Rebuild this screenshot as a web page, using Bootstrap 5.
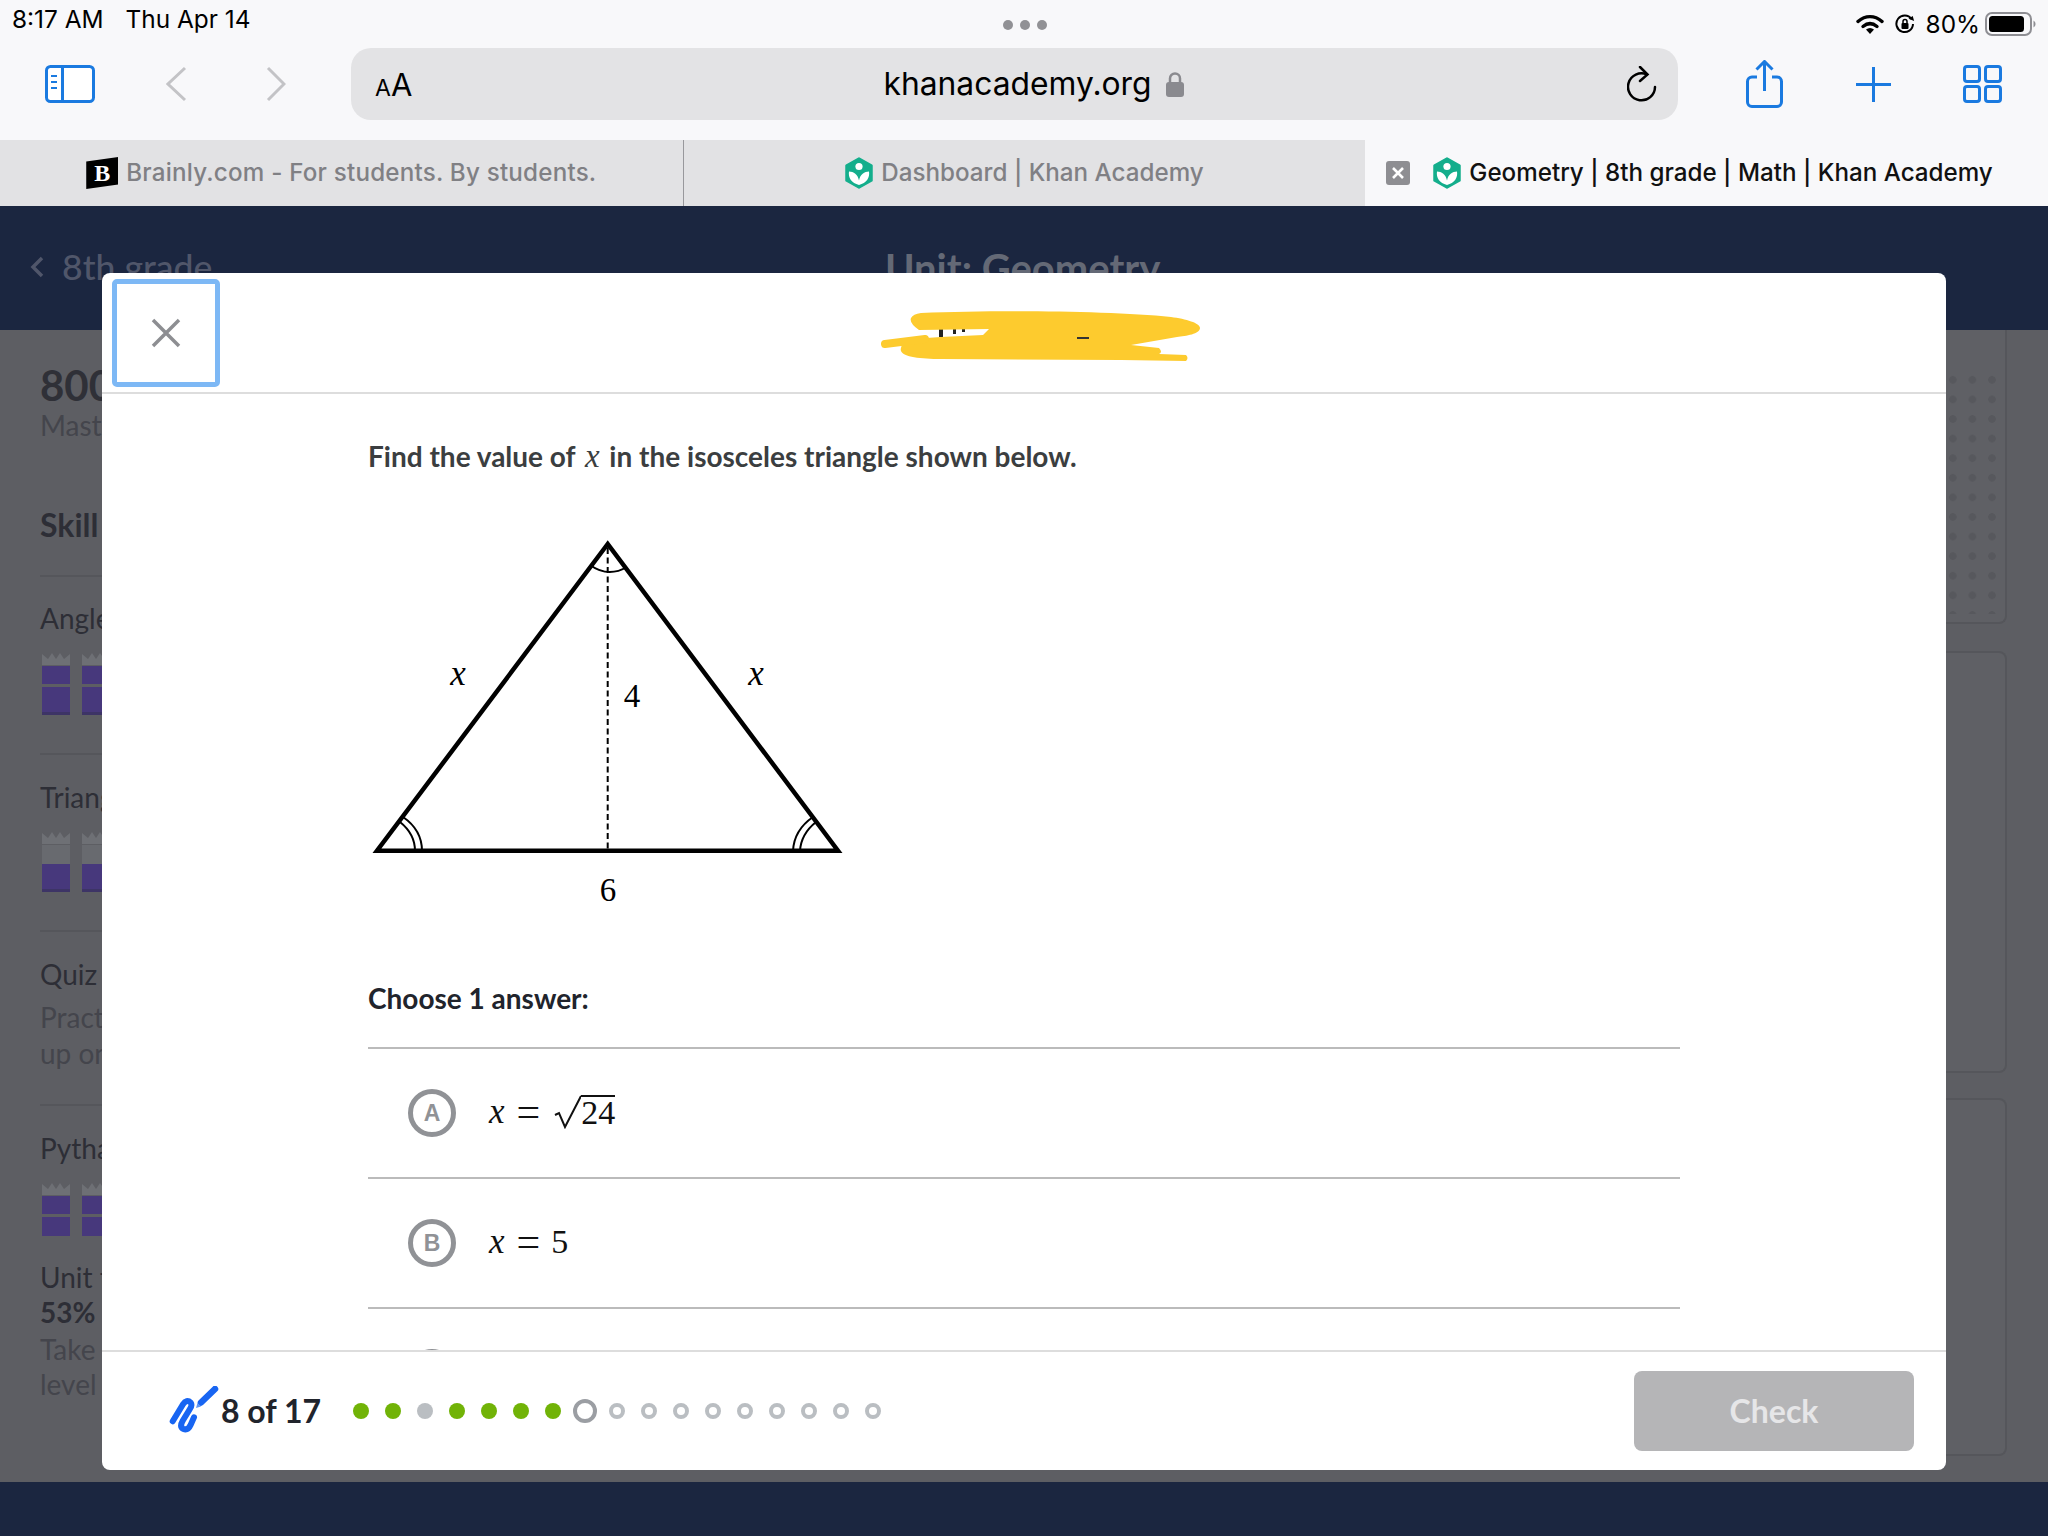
<!DOCTYPE html>
<html lang="en">
<head>
<meta charset="utf-8">
<title>Geometry | 8th grade | Math | Khan Academy</title>
<link href="https://cdn.jsdelivr.net/npm/bootstrap@5.3.0/dist/css/bootstrap.min.css" rel="stylesheet">
<style>
html,body{margin:0;width:2048px;height:1536px;overflow:hidden;background:#5d5e63}
body{font-family:"Lato","Liberation Sans",sans-serif;position:relative}
.chrome-top{background:#f8f8fa;height:140px;font-family:"Inter","Liberation Sans",sans-serif}
.status-row{height:48px;color:#000;font-size:24.4px;line-height:38px}
.status-side{flex:1 1 0}
.status-date{margin-left:22px}
.status-left{padding-left:12px}
.status-right{padding-right:11px;gap:10px}
.pct{margin-right:-5px}
.dots-row{gap:7px;margin-top:20px;height:10px}
.dots-row i{width:10px;height:10px;border-radius:50%;background:#919195;display:block}
.tool-row{height:72px;padding-left:45px}
.ml-back{margin-left:71px}.ml-fwd{margin-left:79px}.ml-pill{margin-left:65px}
.ml-share{margin-left:68px}.ml-plus{margin-left:73px}.ml-grid{margin-left:72px}
.url-pill{width:1327px;height:72px;background:#e3e3e5;border-radius:20px;padding:0 21px 0 24px}
.aa{color:#000;font-size:31px;line-height:1;width:38px;white-space:nowrap}
.aa small{font-size:23px}
.domain{font-size:31.8px;color:#000;margin-left:27px;gap:14px}
.tabs-row{height:66px;font-family:"Inter","Liberation Sans",sans-serif;font-size:24.2px;font-weight:500}
.tab-item{flex:0 0 33.3333%;background:#e2e2e4;color:#808084;gap:8px;white-space:nowrap}
.tab-mid{border-left:1px solid #98989c}
.tab-on{background:#f8f8fa;color:#111;padding-left:21px}
.tab-x{width:24px;height:24px;background:#8e8e92;border-radius:3px;margin-right:15px}
.brainly-text{letter-spacing:.2px}
.brainly-mark{width:32px;height:32px;background:#000;color:#fff;font:700 24px/32px "Liberation Serif",serif;text-align:center;clip-path:polygon(0 14%,100% 0,100% 86%,0 100%)}
.page-head{height:124px;background:#1b2640;color:#50566a;padding-left:30px}
.back-link{font-size:35.6px;font-weight:500;gap:18px;width:200px;white-space:nowrap;margin-top:-2px}
.unit-title{font-size:40px;font-weight:700;color:#646976;margin-left:655px;white-space:nowrap}
.page-main{height:1152px;background:#5d5e63}
.left-col{width:102px;overflow:hidden;padding-left:40px;white-space:nowrap;color:#2d2e36;font-size:28px;line-height:36px}
.points{height:245px;padding-top:33px}
.points b{font-size:42px;line-height:44px;display:block;font-weight:700;color:#2f3037}
.muted-bg{color:#44454c}
.skills-h{font-size:32px;font-weight:700;display:block;margin-top:62px;line-height:40px}
.skill-row{border-top:2px solid #55565b}
.h-178{height:178px;padding-top:23px}.h-177{height:177px;padding-top:24px}.h-174{height:174px;padding-top:24px}
.h-356{height:356px;padding-top:24px}
.gap-top{margin-top:7px}
.gap-take{margin-top:2px}
.bars{gap:12px;margin-top:17px;width:120px;padding-left:2px}
.bar-col{width:28px;flex:none}
.crown{display:block;margin-bottom:1px}
.seg{display:block;background:#47387c}
.seg-off{display:block;background:#686a6f}
.s16{height:18px;margin-bottom:3px}.s31{height:28px;border-bottom:3px solid #3d3466}
.s19{height:19px}
.unit-block{margin-top:24px;line-height:35px}
.right-col{width:102px;overflow:hidden;margin-left:auto}
.bg-panel{width:61px;border-right:2px solid #55565b;border-bottom:2px solid #55565b;border-bottom-right-radius:8px;background:#5f6065}
.panel-a{height:294px;padding-top:40px}
.dot-field{height:244px;background-image:radial-gradient(circle,#57585d 3.5px,transparent 4px);background-size:19.6px 19.6px;background-position:-3px 0}
.panel-b{height:422px;margin-top:27px;border-top:2px solid #55565b;border-top-right-radius:8px}
.panel-c{height:358px;margin-top:25px;border-top:2px solid #55565b;border-top-right-radius:8px}
.page-foot{height:54px;background:#1b2640}
.modal-card{position:absolute;left:102px;top:273px;width:1844px;height:1197px;background:#fff;border-radius:8px;overflow:hidden}
.modal-top{height:121px;border-bottom:2px solid #ddd;padding:6px 10px;position:relative}
.close-box{width:108px;height:108px;border:5px solid #7db8f5;border-radius:5px;background:#fff;padding:0}
.scribble{position:absolute;left:779px;top:38px}
.modal-mid{height:956px;overflow:hidden;padding:44px 266px 0}
.q-text{font-size:28px;line-height:36px;font-weight:700;color:#3b3e40}
.mathx{font-family:"Liberation Serif",serif;font-style:italic;font-weight:400;font-size:33px;margin:0 3px}
.tri-svg{display:block;margin-top:46px}
.tri-svg text{font-family:"Liberation Serif",serif;fill:#000}
.choose{font-size:28px;line-height:36px;font-weight:700;color:#21242c;margin-top:64px;margin-bottom:31px}
.answers{border-top:2px solid #bbb}
.answer{height:130px;border-bottom:2px solid #bbb;padding-left:40px;gap:33px}
.letter{width:48px;height:48px;border:5px solid #909296;border-radius:50%;color:#909296;font:700 23px/1 "Liberation Sans",sans-serif;flex:none}
.math-ans{font-family:"Liberation Serif",serif;font-size:34px;color:#111;line-height:1;white-space:nowrap;margin-top:-3px}
.math-ans em{margin-right:12px;font-size:35px}
.math-ans .eq{margin-right:11px;font-size:42px;font-weight:400;line-height:34px}
.rad-mark{margin-left:3px}
.radicand{border-top:2px solid #111;padding-top:1px;display:inline-block;line-height:30px}
.modal-low{height:120px;border-top:2px solid #ddd;padding:0 32px 0 67px}
.of-count{font-size:32px;font-weight:700;color:#21242c;margin-left:2px;width:124px;white-space:nowrap}
.pdot{width:16px;height:16px;border-radius:50%;display:block;margin:0 8px;flex:none}
.p-g{background:#71b307}.p-s{background:#babec2}
.p-o{border:4px solid #babec2;background:#fff}
.p-now{width:24px;height:24px;margin:0 4px;border:4px solid #9b9ea3;background:#fff}
.check-btn{width:280px;height:80px;margin-left:auto;background:#b5b5b7;border:0;border-radius:8px;color:#e6e6e8;font-size:32px;font-weight:700;padding:0}
.check-btn:disabled{background:#b5b5b7;color:#e6e6e8;opacity:1}
</style>
</head>
<body>
<header class="chrome-top">
  <div class="status-row d-flex">
    <div class="status-side status-left d-flex"><span>8:17 AM</span><span class="status-date">Thu Apr 14</span></div>
    <div class="dots-row d-flex"><i></i><i></i><i></i></div>
    <div class="status-side status-right d-flex justify-content-end align-items-center">
      <svg width="28" height="20" viewBox="0 0 28 20"><g fill="none" stroke="#000" stroke-width="3.4" stroke-linecap="round"><path d="M2 7.500C9.500 1 18.500 1 26 7.500"/><path d="M7 12.500C11.500 8.800 16.500 8.800 21 12.500"/></g><path d="M14 20l-4-4.500c2.500-2 5.500-2 8 0z" fill="#000"/></svg>
      <svg width="22" height="20" viewBox="0 0 22 20"><path d="M17.500 5A8.300 8.300 0 1 0 19 10" fill="none" stroke="#000" stroke-width="2"/><path d="M15 6h6l-3-4z" fill="#000" transform="rotate(20 18 4)"/><rect x="7.500" y="9" width="7" height="6" rx="1" fill="#000"/><path d="M9 9V7.500a2 2 0 0 1 4 0V9" fill="none" stroke="#000" stroke-width="1.500"/></svg>
      <span class="pct">80%</span>
      <svg width="52" height="24" viewBox="0 0 52 24" class="d-block"><rect x="1" y="1" width="45" height="22" rx="6" fill="none" stroke="#8e8e93" stroke-width="2"/><rect x="4" y="4" width="35" height="16" rx="3.500" fill="#000"/><path d="M48.500 8.500a4 4 0 0 1 0 7z" fill="#8e8e93"/></svg>
    </div>
  </div>
  <div class="tool-row d-flex align-items-center">
    <svg width="50" height="38" viewBox="0 0 50 38"><rect x="1.500" y="1.500" width="47" height="35" rx="4" fill="#fff" stroke="#1a7ae0" stroke-width="3"/><path d="M17.500 2v34" stroke="#1a7ae0" stroke-width="3"/><path d="M6 11h6M6 17h6M6 23h6" stroke="#1a7ae0" stroke-width="2.200"/></svg>
    <svg class="ml-back" width="21" height="36" viewBox="0 0 21 36"><path d="M19 2L2 18l17 16" fill="none" stroke="#c3c3c6" stroke-width="3"/></svg>
    <svg class="ml-fwd" width="20" height="36" viewBox="0 0 20 36"><path d="M2 2l16 16L2 34" fill="none" stroke="#c3c3c6" stroke-width="3"/></svg>
    <div class="url-pill ml-pill d-flex justify-content-between align-items-center">
      <span class="aa"><small>A</small>A</span>
      <span class="domain d-flex align-items-center">khanacademy.org
        <svg width="18" height="25" viewBox="0 0 18 25"><rect y="10" width="18" height="15" rx="3" fill="#8a8a8f"/><path d="M4 11V6.500a5 5 0 0 1 10 0V11" fill="none" stroke="#8a8a8f" stroke-width="2.500"/></svg>
      </span>
      <svg width="30" height="36" viewBox="0 0 30 36"><path d="M20 8.500A13.500 13.500 0 1 0 28 21" fill="none" stroke="#000" stroke-width="2.500" stroke-linecap="round"/><path d="M13 1l7.500 7.500L13 15" fill="none" stroke="#000" stroke-width="2.500" stroke-linecap="round"/></svg>
    </div>
    <svg class="ml-share" width="37" height="48" viewBox="0 0 37 48"><path d="M11 17H6a4.500 4.500 0 0 0-4.500 4.500V42A4.500 4.500 0 0 0 6 46.500h25a4.500 4.500 0 0 0 4.500-4.500V21.500A4.500 4.500 0 0 0 31 17h-5" fill="none" stroke="#1a7ae0" stroke-width="3"/><path d="M18.500 31V2M10.500 9.500l8-8 8 8" fill="none" stroke="#1a7ae0" stroke-width="3"/></svg>
    <svg class="ml-plus" width="35" height="35" viewBox="0 0 35 35"><path d="M17.500 0v35M0 17.500h35" stroke="#1a7ae0" stroke-width="3"/></svg>
    <svg class="ml-grid" width="39" height="38" viewBox="0 0 39 38"><g fill="none" stroke="#1a7ae0" stroke-width="3"><rect x="1.500" y="1.500" width="15" height="15" rx="2.500"/><rect x="22.500" y="1.500" width="15" height="15" rx="2.500"/><rect x="1.500" y="21.500" width="15" height="15" rx="2.500"/><rect x="22.500" y="21.500" width="15" height="15" rx="2.500"/></g></svg>
  </div>
</header>

<nav class="tabs-row d-flex">
  <div class="tab-item d-flex align-items-center justify-content-center">
    <span class="brainly-mark">B</span><span class="brainly-text">Brainly.com - For students. By students.</span>
  </div>
  <div class="tab-item tab-mid d-flex align-items-center justify-content-center">
    <svg width="28" height="32" viewBox="0 0 28 32"><path d="M14 1.500L26.500 8.500V23.500L14 30.500L1.500 23.500V8.500z" fill="#14ae8c" stroke="#14ae8c" stroke-width="2.500" stroke-linejoin="round"/><circle cx="14" cy="9.500" r="3.600" fill="#fff"/><path d="M4 14.500C8.500 14.500 13 17.500 14 23.500C15 17.500 19.500 14.500 24 14.500C25 21 21.500 26 14 28C6.500 26 3 21 4 14.500z" fill="#fff"/></svg>
    <span>Dashboard | Khan Academy</span>
  </div>
  <div class="tab-item tab-on d-flex align-items-center">
    <span class="tab-x d-flex align-items-center justify-content-center"><svg width="14" height="14" viewBox="0 0 14 14"><path d="M2 2l10 10M12 2L2 12" stroke="#fff" stroke-width="2.600"/></svg></span>
    <svg width="28" height="32" viewBox="0 0 28 32"><path d="M14 1.500L26.500 8.500V23.500L14 30.500L1.500 23.500V8.500z" fill="#14ae8c" stroke="#14ae8c" stroke-width="2.500" stroke-linejoin="round"/><circle cx="14" cy="9.500" r="3.600" fill="#fff"/><path d="M4 14.500C8.500 14.500 13 17.500 14 23.500C15 17.500 19.500 14.500 24 14.500C25 21 21.500 26 14 28C6.500 26 3 21 4 14.500z" fill="#fff"/></svg>
    <span>Geometry | 8th grade | Math | Khan Academy</span>
  </div>
</nav>

<div class="page-head d-flex align-items-center">
  <div class="back-link d-flex align-items-center">
    <svg width="14" height="22" viewBox="0 0 14 22"><path d="M12 2L3 11l9 9" fill="none" stroke="#50566a" stroke-width="3.500"/></svg>
    <span>8th grade</span>
  </div>
  <div class="unit-title">Unit: Geometry</div>
</div>

<main class="page-main d-flex">
  <div class="left-col">
    <div class="points"><b>800</b><span class="muted-bg">Mastery</span><span class="skills-h">Skill</span></div>
    <div class="skill-row h-178">
      <div>Angles</div>
      <div class="bars d-flex">
        <div class="bar-col"><svg class="crown" width="28" height="12" viewBox="0 0 28 12"><path d="M0 1l6 5 4-6 4 6 4-6 4 6 6-5v11H0z" fill="#6e7075"/></svg><span class="seg s16"></span><span class="seg s31"></span></div>
        <div class="bar-col"><svg class="crown" width="28" height="12" viewBox="0 0 28 12"><path d="M0 1l6 5 4-6 4 6 4-6 4 6 6-5v11H0z" fill="#6e7075"/></svg><span class="seg s16"></span><span class="seg s31"></span></div>
      </div>
    </div>
    <div class="skill-row h-177">
      <div>Triangles</div>
      <div class="bars d-flex">
        <div class="bar-col"><svg class="crown" width="28" height="12" viewBox="0 0 28 12"><path d="M0 1l6 5 4-6 4 6 4-6 4 6 6-5v11H0z" fill="#6e7075"/></svg><span class="seg-off s19"></span><span class="seg s31"></span></div>
        <div class="bar-col"><svg class="crown" width="28" height="12" viewBox="0 0 28 12"><path d="M0 1l6 5 4-6 4 6 4-6 4 6 6-5v11H0z" fill="#6e7075"/></svg><span class="seg-off s19"></span><span class="seg s31"></span></div>
      </div>
    </div>
    <div class="skill-row h-174">
      <div>Quiz 1</div>
      <div class="muted-bg gap-top">Practice</div>
      <div class="muted-bg">up on</div>
    </div>
    <div class="skill-row h-356">
      <div>Pythagorean</div>
      <div class="bars d-flex">
        <div class="bar-col"><svg class="crown" width="28" height="12" viewBox="0 0 28 12"><path d="M0 1l6 5 4-6 4 6 4-6 4 6 6-5v11H0z" fill="#6e7075"/></svg><span class="seg s16"></span><span class="seg s19"></span></div>
        <div class="bar-col"><svg class="crown" width="28" height="12" viewBox="0 0 28 12"><path d="M0 1l6 5 4-6 4 6 4-6 4 6 6-5v11H0z" fill="#6e7075"/></svg><span class="seg s16"></span><span class="seg s19"></span></div>
      </div>
      <div class="unit-block">
        <div>Unit test</div>
        <div class="fw-bold">53%</div>
        <div class="muted-bg gap-take">Take</div>
        <div class="muted-bg">level</div>
      </div>
    </div>
  </div>
  <div class="right-col">
    <div class="bg-panel panel-a"><div class="dot-field"></div></div>
    <div class="bg-panel panel-b"></div>
    <div class="bg-panel panel-c"></div>
  </div>
</main>
<div class="page-foot"></div>

<section class="modal-card d-flex flex-column">
  <div class="modal-top">
    <button class="close-box d-flex align-items-center justify-content-center" type="button" aria-label="Close">
      <svg width="30" height="30" viewBox="0 0 30 30"><path d="M2 2l26 26M28 2L2 28" stroke="#8d8e92" stroke-width="3.500"/></svg>
    </button>
    <svg class="scribble" width="322" height="52" viewBox="0 0 322 52">
      <rect x="58" y="18" width="4" height="8" fill="#222"/><rect x="72" y="18" width="3" height="5" fill="#222"/><rect x="81" y="18" width="3" height="3" fill="#222"/>
      <path d="M40 2C120-1 230 0 290 6C305 8 319 12 319 17C319 23 305 25 296 26L250 34L278 37Q282 41 278 43L305 44Q308 47 305 50L240 49L60 48C40 48 22 46 20 40Q18 33 30 28L60 26L102 24L108 18L38 19Q28 12 30 7Q32 3 40 2z" fill="#fdcb2e"/>
      <path d="M4 33L44 28" stroke="#fdcb2e" stroke-width="8" stroke-linecap="round"/>
      <rect x="196" y="26" width="12" height="2" fill="#333"/>
    </svg>
  </div>

  <div class="modal-mid">
    <p class="q-text m-0">Find the value of <span class="mathx">x</span> in the isosceles triangle shown below.</p>
    <svg class="tri-svg" width="480" height="396" viewBox="0 0 480 396">
      <path d="M239.700 24L9 330.700H470z" fill="none" stroke="#000" stroke-width="4.500" stroke-linejoin="miter"/>
      <path d="M239.700 28V330" stroke="#000" stroke-width="2" stroke-dasharray="6 3.500"/>
      <g fill="none" stroke="#000" stroke-width="2">
        <path d="M222 45Q240 58 259 47"/>
        <path d="M35 297Q54 310 54 331"/><path d="M32 302Q47 314 47 331"/>
        <path d="M445 297Q426 310 425 331"/><path d="M448 302Q433 314 432 331"/>
      </g>
      <text x="90" y="165" font-size="35" font-style="italic" text-anchor="middle">x</text>
      <text x="388" y="165" font-size="35" font-style="italic" text-anchor="middle">x</text>
      <text x="264" y="187" font-size="33" text-anchor="middle">4</text>
      <text x="240" y="381" font-size="33" text-anchor="middle">6</text>
    </svg>
    <p class="choose">Choose 1 answer:</p>
    <div class="answers">
      <div class="answer d-flex align-items-center">
        <span class="letter d-flex align-items-center justify-content-center">A</span>
        <span class="math-ans d-flex align-items-center"><em>x</em><span class="eq">=</span><svg class="rad-mark" width="27" height="34" viewBox="0 0 27 34"><path d="M1 20l4-2 6 14L27 1" fill="none" stroke="#111" stroke-width="2"/></svg><span class="radicand">24</span></span>
      </div>
      <div class="answer d-flex align-items-center">
        <span class="letter d-flex align-items-center justify-content-center">B</span>
        <span class="math-ans d-flex align-items-center"><em>x</em><span class="eq">=</span><span>5</span></span>
      </div>
      <div class="answer d-flex align-items-center">
        <span class="letter d-flex align-items-center justify-content-center">C</span>
      </div>
    </div>
  </div>

  <div class="modal-low d-flex align-items-center">
    <svg width="50" height="50" viewBox="0 0 50 50"><path d="M3.700 35.300L13.700 18.700Q17.700 12.700 21.700 16.700Q23.700 19.300 20.300 24L13.700 34.700Q10.300 40.700 14.300 43Q19 44.700 21.700 38.700L25 31.300" fill="none" stroke="#1865f2" stroke-width="6" stroke-linecap="round" stroke-linejoin="round"/><path d="M32 16.500L46 3" stroke="#1865f2" stroke-width="6.500" stroke-linecap="round"/><path d="M27 22l1.500-5 3.500 3.500z" fill="#5f96f5"/></svg>
    <span class="of-count">8 of 17</span>
    <div class="d-flex align-items-center">
      <span class="pdot p-g"></span><span class="pdot p-g"></span><span class="pdot p-s"></span><span class="pdot p-g"></span><span class="pdot p-g"></span><span class="pdot p-g"></span><span class="pdot p-g"></span><span class="pdot p-now"></span><span class="pdot p-o"></span><span class="pdot p-o"></span><span class="pdot p-o"></span><span class="pdot p-o"></span><span class="pdot p-o"></span><span class="pdot p-o"></span><span class="pdot p-o"></span><span class="pdot p-o"></span><span class="pdot p-o"></span>
    </div>
    <button class="btn check-btn" type="button" disabled>Check</button>
  </div>
</section>
<script src="https://cdn.jsdelivr.net/npm/bootstrap@5.3.0/dist/js/bootstrap.bundle.min.js"></script>
</body>
</html>
